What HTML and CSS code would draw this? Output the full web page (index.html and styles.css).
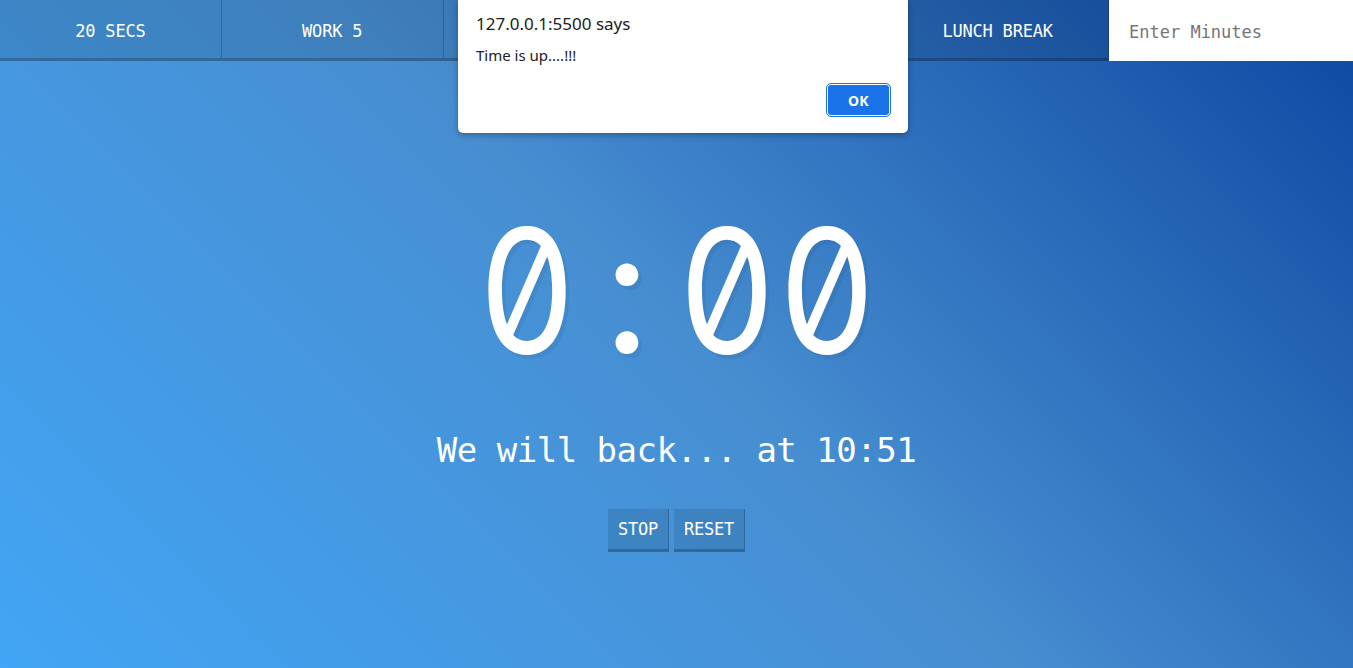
FILE: index.html
```html
<!DOCTYPE html>
<html lang="en">
<head>
<meta charset="utf-8">
<title>Countdown Timer</title>
<link rel="stylesheet" href="styles.css">
</head>
<body>
<div class="timer">
  <div class="timer__controls">
    <button class="timer__button">20 Secs</button>
    <button class="timer__button">Work 5</button>
    <button class="timer__button">Quick 15</button>
    <button class="timer__button">Snack 5</button>
    <button class="timer__button">Lunch Break</button>
    <form class="timer__form">
      <input class="timer__input" type="text" name="minutes" placeholder="Enter Minutes">
    </form>
  </div>
  <div class="display">
    <h1 class="display__time-left"><span class="glyph">0</span><span class="glyph glyph--colon">:</span><span class="glyph">0</span><span class="glyph">0</span></h1>
    <p class="display__end-time">We will back... at 10:51</p>
    <div class="display__actions">
      <button class="action__button">Stop</button>
      <button class="action__button">Reset</button>
    </div>
  </div>
</div>

<div class="alert" role="alertdialog">
  <div class="alert__title">127.0.0.1:5500 says</div>
  <div class="alert__message">Time is up....!!!</div>
  <div class="alert__footer">
    <button class="alert__ok">OK</button>
  </div>
</div>
</body>
</html>
```

FILE: styles.css
```css
html {
  box-sizing: border-box;
  font-size: 10px;
}
*, *::before, *::after {
  box-sizing: inherit;
}
body {
  margin: 0;
  min-height: 100vh;
  text-align: center;
  font-family: "DejaVu Sans Mono", "Liberation Mono", monospace;
  background: linear-gradient(45deg, #42a5f5 0%, #478ed1 50%, #0d47a1 100%);
}
.timer {
  display: flex;
  flex-direction: column;
  min-height: 100vh;
}
.timer__controls {
  display: flex;
  height: 61px;
}
.timer__button {
  flex: 1 1 0;
  min-width: 0;
  margin: 0;
  border: 0;
  border-right: 1px solid rgba(0, 0, 0, 0.2);
  border-bottom: 3px solid rgba(0, 0, 0, 0.2);
  background: rgba(0, 0, 0, 0.1);
  color: #fff;
  font-family: "DejaVu Sans Mono", monospace;
  font-size: 17px;
  line-height: 20px;
  letter-spacing: -0.2px;
  text-transform: uppercase;
  padding: 4px 0 0;
  cursor: pointer;
}
.timer__form {
  flex: 0 0 244px;
  min-width: 0;
  display: flex;
  margin: 0;
}
.timer__input {
  flex: 1;
  width: 0;
  min-width: 0;
  border: 0;
  padding: 2px 20px 0;
  background: #fff;
  font-family: "DejaVu Sans Mono", monospace;
  font-size: 17px;
  color: #333;
  outline: none;
}
.timer__input::placeholder {
  color: #757575;
}
.display {
  flex: 1;
  display: flex;
  flex-direction: column;
  align-items: center;
  padding-top: 142px;
}
.display__time-left {
  display: flex;
  margin: 0;
  font-family: "Inter", sans-serif;
  font-feature-settings: "tnum" 1, "zero" 1;
  font-weight: normal;
  font-size: 172px;
  line-height: 174px;
  height: 174px;
  color: #fff;
  text-shadow: 4px 4px 0 rgba(0, 0, 0, 0.05);
  white-space: nowrap;
}
.glyph {
  display: flex;
  justify-content: center;
  width: 100px;
  transform: scaleX(0.88);
}
.glyph--colon {
  transform: none;
}
.display__end-time {
  margin: 56px 0 0;
  font-size: 34px;
  line-height: 34px;
  letter-spacing: -0.5px;
  color: #fff;
}
.display__actions {
  display: flex;
  gap: 5px;
  margin-top: 42px;
}
.action__button {
  margin: 0;
  border: 0;
  border-right: 1px solid rgba(0, 0, 0, 0.2);
  border-bottom: 3px solid rgba(0, 0, 0, 0.2);
  background: rgba(0, 0, 0, 0.1);
  color: #fff;
  font-family: "DejaVu Sans Mono", monospace;
  font-size: 17px;
  line-height: 20px;
  letter-spacing: -0.25px;
  text-transform: uppercase;
  padding: 10px;
  cursor: pointer;
}

/* Browser alert dialog overlay */
.alert {
  position: absolute;
  top: 0;
  left: 458px;
  width: 450px;
  height: 133px;
  padding: 14px 17px 16px 18px;
  background: #fff;
  border-radius: 0 0 5px 5px;
  box-shadow: 0 2px 6px rgba(0, 0, 0, 0.3), 0 0 1px rgba(0, 0, 0, 0.2);
  text-align: left;
  font-family: "Noto Sans", "Open Sans", sans-serif;
  color: #202124;
  display: flex;
  flex-direction: column;
}
.alert__title {
  font-size: 17px;
  line-height: 20px;
}
.alert__message {
  margin-top: 11px;
  font-size: 15px;
  line-height: 20px;
}
.alert__footer {
  display: flex;
  justify-content: flex-end;
  margin-top: auto;
}
.alert__ok {
  width: 63px;
  height: 32px;
  margin: 1px;
  border: 0;
  border-radius: 4px;
  background: #1a73e8;
  color: #fff;
  font-family: "Noto Sans", "Open Sans", sans-serif;
  font-weight: bold;
  font-size: 14px;
  letter-spacing: 0.3px;
  box-shadow: inset 0 0 0 1px #fff;
  outline: 1px solid #1a73e8;
  cursor: pointer;
}
```
